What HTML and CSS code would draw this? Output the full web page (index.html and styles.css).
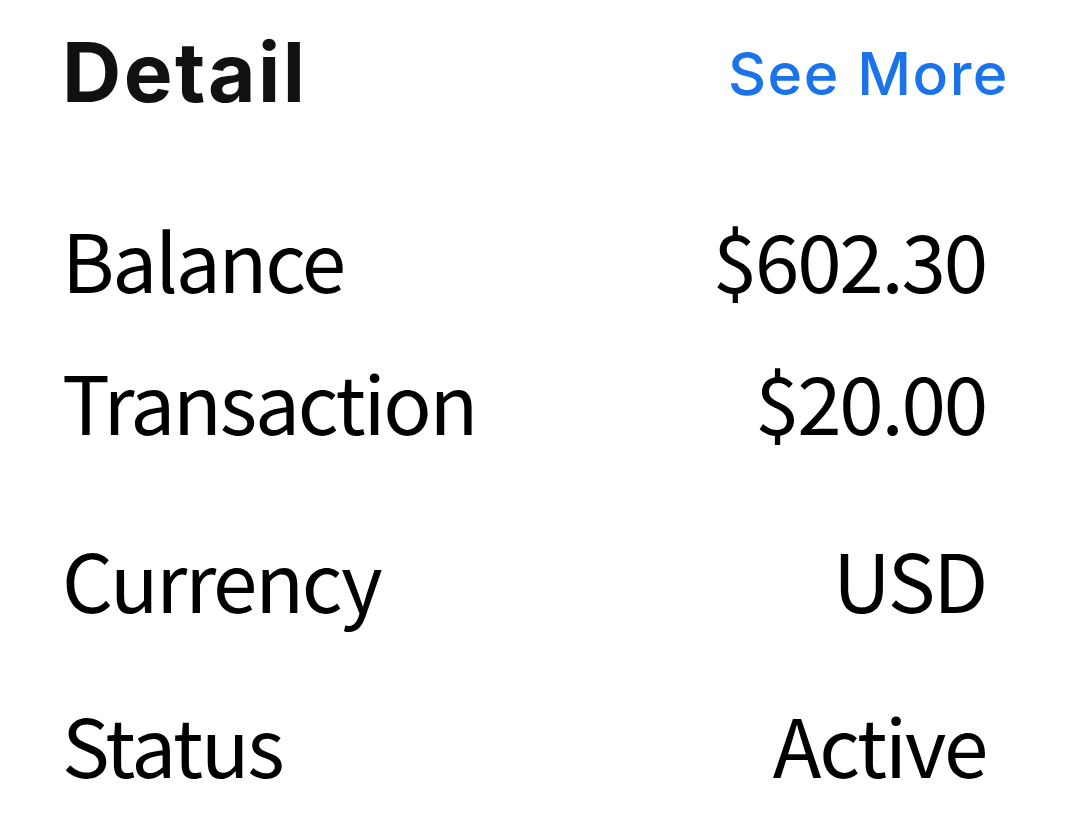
FILE: index.html
```html
<!DOCTYPE html>
<html>
<head>
<meta charset="utf-8">
<link rel="stylesheet" href="styles.css">
</head>
<body>
<div class="card">
  <div class="header">
    <div class="title">Detail</div>
    <div class="more">See More</div>
  </div>
  <div class="rows">
    <div class="row r1"><span>Balance</span><span>$602.30</span></div>
    <div class="row r2"><span>Transaction</span><span>$20.00</span></div>
    <div class="row r3"><span>Currency</span><span>USD</span></div>
    <div class="row r4"><span>Status</span><span>Active</span></div>
  </div>
</div>
</body>
</html>
```
FILE: styles.css
```css
html, body { margin: 0; padding: 0; background: #fff; }
.card { padding: 0 93px 0 62px; }
.header { display: flex; justify-content: space-between; align-items: flex-start; height: 130px; line-height: 1; padding-top: 32px; box-sizing: border-box; }
.title { font-family: Inter, sans-serif; font-weight: 700; font-size: 82px; color: #111; letter-spacing: 2.5px; }
.more { font-family: Inter, sans-serif; font-weight: 500; font-size: 59px; color: #1a73e8; margin-right: -22px; margin-top: 12px; letter-spacing: 1.5px; }
.rows { font-family: "Noto Sans CJK SC", sans-serif; font-size: 80px; letter-spacing: -2.2px; color: #000; line-height: 1; }
.row { display: flex; justify-content: space-between; }
.row span:last-child { margin-right: 1px; }
.r1 { margin-top: 88px; }
.r2 { margin-top: 62px; }
.r3 { margin-top: 98px; }
.r4 { margin-top: 85px; }
```
